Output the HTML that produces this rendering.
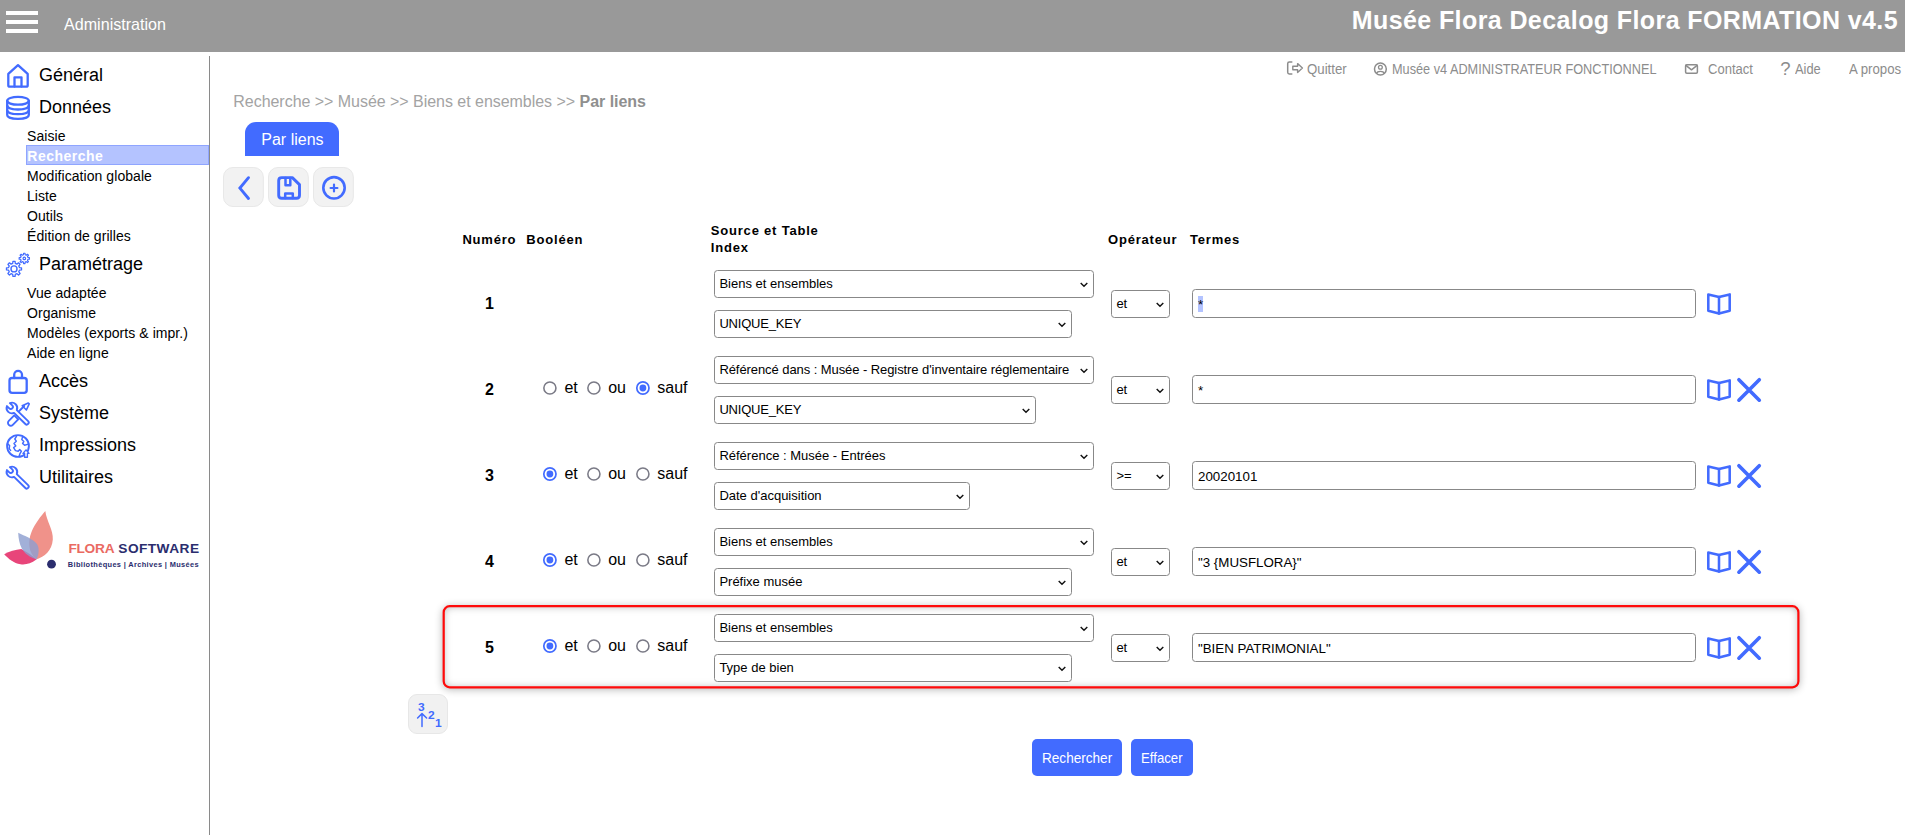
<!DOCTYPE html>
<html lang="fr"><head><meta charset="utf-8"><title>Administration</title><style>
*{box-sizing:border-box}
html,body{margin:0;padding:0}
body{width:1905px;height:835px;position:relative;overflow:hidden;background:#fff;font-family:"Liberation Sans",sans-serif;color:#000}
.t{position:absolute;white-space:nowrap}
.a{position:absolute}
svg{position:absolute;overflow:visible}
.sel{position:absolute;border:1px solid #888;border-radius:3.5px;background:#fff;height:28px}
.sel span{position:absolute;left:4.4px;top:0;font-size:13px;line-height:26px;white-space:nowrap}
.inp{position:absolute;border:1px solid #888;border-radius:3.5px;background:#fff}
.inp span{position:absolute;left:5px;top:1.6px;font-size:13.33px;white-space:nowrap}
.rad{position:absolute;width:13.6px;height:13.6px;border-radius:50%;border:1.4px solid #77777f;background:#fff}
.rad.on{border:1.6px solid #426bff}
.rad.on:after{content:"";position:absolute;left:50%;top:50%;width:7px;height:7px;margin:-3.5px 0 0 -3.5px;border-radius:50%;background:#426bff}
.ib{position:absolute;width:40px;height:40px;background:#f1f1f1;border:1px solid #e7e7e7;border-radius:9px}
.btn{position:absolute;background:#426bff;border-radius:5px;height:37px}
</style></head><body>
<div class="a" style="left:0;top:0;width:1905px;height:51.6px;background:#999"></div>
<div class="a" style="left:6px;top:11px;width:32px;height:4px;background:#fff"></div>
<div class="a" style="left:6px;top:20px;width:32px;height:4px;background:#fff"></div>
<div class="a" style="left:6px;top:29px;width:32px;height:4px;background:#fff"></div>
<div class="t" style="left:63.8px;top:14.00px;font-size:17px;line-height:21px;color:#fff;font-weight:normal;transform:scaleX(0.947);transform-origin:left center;">Administration</div>
<div class="t" style="right:7.0px;top:5.00px;font-size:25px;line-height:30px;color:#fff;font-weight:bold;letter-spacing:0.4px;">Musée Flora Decalog Flora FORMATION v4.5</div>
<div class="a" style="left:209px;top:56px;width:1.3px;height:779px;background:#8a8a8a"></div>
<div class="t" style="left:39px;top:64.00px;font-size:18px;line-height:22px;color:#000;font-weight:normal;">Général</div>
<div class="t" style="left:39px;top:96.00px;font-size:18px;line-height:22px;color:#000;font-weight:normal;">Données</div>
<div class="t" style="left:39px;top:253.00px;font-size:18px;line-height:22px;color:#000;font-weight:normal;">Paramétrage</div>
<div class="t" style="left:39px;top:370.00px;font-size:18px;line-height:22px;color:#000;font-weight:normal;">Accès</div>
<div class="t" style="left:39px;top:402.00px;font-size:18px;line-height:22px;color:#000;font-weight:normal;">Système</div>
<div class="t" style="left:39px;top:434.00px;font-size:18px;line-height:22px;color:#000;font-weight:normal;">Impressions</div>
<div class="t" style="left:39px;top:466.00px;font-size:18px;line-height:22px;color:#000;font-weight:normal;">Utilitaires</div>
<div class="t" style="left:27px;top:127.50px;font-size:14px;line-height:17px;color:#000;font-weight:normal;letter-spacing:0.06px;">Saisie</div>
<div class="t" style="left:27px;top:167.50px;font-size:14px;line-height:17px;color:#000;font-weight:normal;letter-spacing:0.06px;">Modification globale</div>
<div class="t" style="left:27px;top:187.50px;font-size:14px;line-height:17px;color:#000;font-weight:normal;letter-spacing:0.06px;">Liste</div>
<div class="t" style="left:27px;top:207.50px;font-size:14px;line-height:17px;color:#000;font-weight:normal;letter-spacing:0.06px;">Outils</div>
<div class="t" style="left:27px;top:227.50px;font-size:14px;line-height:17px;color:#000;font-weight:normal;letter-spacing:0.06px;">Édition de grilles</div>
<div class="t" style="left:27px;top:284.50px;font-size:14px;line-height:17px;color:#000;font-weight:normal;letter-spacing:0.06px;">Vue adaptée</div>
<div class="t" style="left:27px;top:304.50px;font-size:14px;line-height:17px;color:#000;font-weight:normal;letter-spacing:0.06px;">Organisme</div>
<div class="t" style="left:27px;top:324.50px;font-size:14px;line-height:17px;color:#000;font-weight:normal;letter-spacing:0.06px;">Modèles (exports &amp; impr.)</div>
<div class="t" style="left:27px;top:344.50px;font-size:14px;line-height:17px;color:#000;font-weight:normal;letter-spacing:0.06px;">Aide en ligne</div>
<div class="a" style="left:26px;top:145px;width:183px;height:20px;background:#b4c3ff;border:1px solid #8fa5ff"></div>
<div class="t" style="left:27.3px;top:147.50px;font-size:14px;line-height:17px;color:#fff;font-weight:bold;letter-spacing:0.5px;">Recherche</div>
<svg style="left:0;top:0" width="60" height="500"><g fill="none" stroke="#426bff" stroke-linecap="round" stroke-linejoin="round" stroke-width="2.3"><path d="M8.3 73.8 L18 65.2 L27.7 73.8 V85.2 Q27.7 86.7 26.2 86.7 H9.8 Q8.3 86.7 8.3 85.2 Z"/><path d="M14.5 86.5 V77.3 H21.5 V86.5"/><ellipse cx="18" cy="100.8" rx="10.8" ry="3.9"/><path d="M7.2 100.8 V115 C7.2 120.2 28.8 120.2 28.8 115 V100.8"/><path d="M7.2 105.6 C7.2 110.8 28.8 110.8 28.8 105.6"/><path d="M7.2 110.3 C7.2 115.5 28.8 115.5 28.8 110.3"/><rect x="9.5" y="378" width="17.2" height="14.8" rx="2.6"/><path d="M14.2 378 V374.8 A3.9 3.9 0 0 1 22 374.8 V378"/></g></svg>
<svg style="left:0;top:0" width="60" height="500"><g fill="none" stroke="#426bff" stroke-linecap="round" stroke-linejoin="round"><path stroke-width="1.3" d="M12.69 263.45 L12.93 261.38 L15.07 261.38 L15.31 263.45 L16.93 264.13 L18.56 262.82 L20.08 264.34 L18.77 265.97 L19.45 267.59 L21.52 267.83 L21.52 269.97 L19.45 270.21 L18.77 271.83 L20.08 273.46 L18.56 274.98 L16.93 273.67 L15.31 274.35 L15.07 276.42 L12.93 276.42 L12.69 274.35 L11.07 273.67 L9.44 274.98 L7.92 273.46 L9.23 271.83 L8.55 270.21 L6.48 269.97 L6.48 267.83 L8.55 267.59 L9.23 265.97 L7.92 264.34 L9.44 262.82 L11.07 264.13 Z"/><circle cx="14" cy="268.9" r="3.0" stroke-width="1.4"/><path stroke-width="1.15" d="M23.42 254.75 L23.57 253.25 L25.03 253.25 L25.18 254.75 L26.26 255.20 L27.42 254.24 L28.46 255.28 L27.50 256.44 L27.95 257.52 L29.45 257.67 L29.45 259.13 L27.95 259.28 L27.50 260.36 L28.46 261.52 L27.42 262.56 L26.26 261.60 L25.18 262.05 L25.03 263.55 L23.57 263.55 L23.42 262.05 L22.34 261.60 L21.18 262.56 L20.14 261.52 L21.10 260.36 L20.65 259.28 L19.15 259.13 L19.15 257.67 L20.65 257.52 L21.10 256.44 L20.14 255.28 L21.18 254.24 L22.34 255.20 Z"/><circle cx="24.3" cy="258.4" r="1.25" stroke-width="1.2"/></g></svg>
<svg style="left:0;top:0" width="60" height="500"><g fill="none" stroke="#426bff" stroke-linecap="round" stroke-linejoin="round" stroke-width="1.9"><path transform="translate(11.9 472.0) rotate(44.5)" d="M-4.87 -2.1 A5.3 5.3 0 0 1 4.93 -1.95 L20.8 -1.95 A1.95 1.95 0 0 1 20.8 1.95 L4.93 1.95 A5.3 5.3 0 0 1 -4.87 2.1 L-1.6 2.1 A2.1 2.1 0 0 0 -1.6 -2.1 Z"/></g><g fill="none" stroke="#426bff" stroke-linecap="round" stroke-linejoin="round" stroke-width="1.9"><path d="M8.8 420.8 L14.2 415.4 L18.2 419.4 L12.8 424.8 A2.8 2.8 0 0 1 8.8 420.8 Z"/><path d="M16.4 413.8 L24.2 406"/><path d="M22.2 405.8 L28.3 403 L29.2 403.9 L26.4 410 Z" stroke-width="1.6"/><path transform="translate(11.9 408.0) rotate(44.5)" d="M-4.87 -2.1 A5.3 5.3 0 0 1 4.93 -1.95 L20.8 -1.95 A1.95 1.95 0 0 1 20.8 1.95 L4.93 1.95 A5.3 5.3 0 0 1 -4.87 2.1 L-1.6 2.1 A2.1 2.1 0 0 0 -1.6 -2.1 Z" fill="#fff"/></g></svg>
<svg style="left:0;top:0" width="60" height="500"><g fill="none" stroke="#426bff" stroke-linecap="round" stroke-linejoin="round" stroke-width="1.9"><circle cx="18" cy="446" r="10.9"/><g stroke-width="1.45"><path d="M16.5 436.3 L14.8 439 L16.3 441.2 L14 443.5 L15.8 446 L13.6 447.6 L15.5 450.6 L18.2 451.3 L19.7 449.6 L21.4 451.2 L20 453.6 L19 456.4"/><path d="M22.5 437 L21.8 439.6 L23.8 441.6 L22.6 443.4 L24.6 445.2 L27.6 444.4"/><path d="M8.2 444.3 L9.6 445.6 L9.2 448.6 L10.6 450.4"/></g><path d="M23 453.4 L26 449.9 L29 453.4 H27.4 V457.2 H24.6 V453.4 Z" fill="#fff" stroke-width="1.4"/></g></svg>
<svg style="left:0;top:0" width="210" height="600"><path d="M45.3 511 C46.5 521 53.5 530 52.8 539.5 C52 551 44.5 556.5 36.2 559.6 C28 552 27.8 541 31.5 532 C35 523.5 41 516 45.3 511 Z" fill="#f0928a"/><path d="M4.2 554.3 C9 551.5 15.5 549.5 21.3 549 C28 552.5 33 556 36.4 559.6 C31 563.5 26 565 20.5 564.3 C13.5 563.3 8.5 558.8 4.2 554.3 Z" fill="#e8457a"/><path d="M18.2 532.8 C25 536 32.5 539 36.5 543.5 C39.8 547.5 39 554 36.6 559.3 C30 557.5 24.5 553.5 21.8 548.5 C19.3 543.8 18.4 538 18.2 532.8 Z" fill="#8e9fd0" fill-opacity="0.82"/><circle cx="51.5" cy="564.2" r="4.4" fill="#2b2d6e"/></svg>
<div class="t" style="left:68.4px;top:540.00px;font-size:13.7px;line-height:17px;color:#ea6a62;font-weight:bold;letter-spacing:-0.25px;">FLORA</div>
<div class="t" style="left:118.3px;top:540.00px;font-size:13.7px;line-height:17px;color:#2b2d6e;font-weight:bold;letter-spacing:0.45px;">SOFTWARE</div>
<div class="t" style="left:67.8px;top:560.00px;font-size:7.4px;line-height:9px;color:#2b2d6e;font-weight:bold;letter-spacing:0.36px;">Bibliothèques | Archives | Musées</div>
<div class="t" style="left:1307.2px;top:60.50px;font-size:14px;line-height:17px;color:#8c8c8c;font-weight:normal;transform:scaleX(0.945);transform-origin:left center;">Quitter</div>
<div class="t" style="left:1392.2px;top:60.50px;font-size:14px;line-height:17px;color:#8c8c8c;font-weight:normal;transform:scaleX(0.9075);transform-origin:left center;">Musée v4 ADMINISTRATEUR FONCTIONNEL</div>
<div class="t" style="left:1707.9px;top:60.50px;font-size:14px;line-height:17px;color:#8c8c8c;font-weight:normal;transform:scaleX(0.93);transform-origin:left center;">Contact</div>
<div class="t" style="left:1795.4px;top:60.50px;font-size:14px;line-height:17px;color:#8c8c8c;font-weight:normal;transform:scaleX(0.92);transform-origin:left center;">Aide</div>
<div class="t" style="left:1849.1px;top:60.50px;font-size:14px;line-height:17px;color:#8c8c8c;font-weight:normal;transform:scaleX(0.944);transform-origin:left center;">A propos</div>
<div class="t" style="left:1780.2px;top:57.00px;font-size:18.5px;line-height:23px;color:#8c8c8c;font-weight:normal;">?</div>
<svg style="left:0;top:0" width="1905" height="90"><g fill="none" stroke="#8c8c8c" stroke-linecap="round" stroke-linejoin="round" stroke-width="1.5"><path d="M1291.8 62.1 H1289.3 Q1287.7 62.1 1287.7 63.7 V72.3 Q1287.7 73.9 1289.3 73.9 H1291.8"/><path d="M1292.8 66.2 H1297.6 V63.6 L1302.4 68 L1297.6 72.4 V69.8 H1292.8 Z" stroke-width="1.4"/><circle cx="1380.4" cy="69" r="5.9"/><circle cx="1380.4" cy="67.2" r="1.9" stroke-width="1.3"/><path d="M1376.6 73.3 C1377.4 70.6 1383.4 70.6 1384.2 73.3" stroke-width="1.3"/><rect x="1685.6" y="64.7" width="11.8" height="8.6" rx="1.2"/><path d="M1685.9 65.4 L1691.5 69.8 L1697.1 65.4"/></g></svg>
<div class="t" style="left:233.3px;top:91.50px;font-size:16px;line-height:20px;color:#a3a3a3;font-weight:normal;letter-spacing:-0.035px;">Recherche &gt;&gt; Musée &gt;&gt; Biens et ensembles &gt;&gt; <b style="color:#8f8f8f">Par liens</b></div>
<div class="a" style="left:245px;top:122px;width:94px;height:34px;background:#426bff;border-radius:11px 11px 0 0"></div>
<div class="t" style="left:261.3px;top:129.50px;font-size:16px;line-height:20px;color:#fff;font-weight:normal;">Par liens</div>
<svg style="left:223.1px;top:167px" width="41" height="40"><rect x="0.5" y="0.5" width="39.8" height="39" rx="9.5" fill="#f2f2f2" stroke="#e8e8e8" stroke-width="1"/></svg>
<svg style="left:268.15px;top:167px" width="41" height="40"><rect x="0.5" y="0.5" width="39.8" height="39" rx="9.5" fill="#f2f2f2" stroke="#e8e8e8" stroke-width="1"/></svg>
<svg style="left:313.2px;top:167px" width="41" height="40"><rect x="0.5" y="0.5" width="39.8" height="39" rx="9.5" fill="#f2f2f2" stroke="#e8e8e8" stroke-width="1"/></svg>
<svg style="left:0;top:0" width="500" height="260"><g fill="none" stroke="#426bff" stroke-linecap="round" stroke-linejoin="round" stroke-width="2.9"><path d="M248.5 177.7 L239.9 188.1 L248.5 198.5" stroke-linejoin="miter"/><path d="M278.7 180.6 Q278.7 177.6 281.7 177.6 H292.3 L299.5 184.6 V195.3 Q299.5 198.3 296.5 198.3 H281.7 Q278.7 198.3 278.7 195.3 Z"/><path d="M285.5 178 V185.3 H290.3 V178" stroke-width="2.5"/><path d="M285.2 198 V193.4 H292.8 V198" stroke-width="2.5"/><circle cx="334" cy="187.85" r="10.7" stroke-width="2.6"/><path d="M330.6 188 H337.4 M334 184.6 V191.4" stroke-width="2.2"/></g></svg>
<div class="t" style="left:462.4px;top:231.50px;font-size:13px;line-height:16px;color:#000;font-weight:bold;letter-spacing:0.8px;">Numéro</div>
<div class="t" style="left:526.3px;top:231.50px;font-size:13px;line-height:16px;color:#000;font-weight:bold;letter-spacing:0.8px;">Booléen</div>
<div class="t" style="left:710.8px;top:222.50px;font-size:13px;line-height:16px;color:#000;font-weight:bold;letter-spacing:0.8px;">Source et Table</div>
<div class="t" style="left:710.8px;top:239.50px;font-size:13px;line-height:16px;color:#000;font-weight:bold;letter-spacing:0.8px;">Index</div>
<div class="t" style="left:1108px;top:231.50px;font-size:13px;line-height:16px;color:#000;font-weight:bold;letter-spacing:0.8px;">Opérateur</div>
<div class="t" style="left:1190px;top:231.50px;font-size:13px;line-height:16px;color:#000;font-weight:bold;letter-spacing:0.8px;">Termes</div>
<div class="a" style="left:443px;top:606px;width:1356px;height:82px;border-radius:7px;box-shadow:0 1px 9px rgba(0,0,0,.33), inset 0 0 8px rgba(0,0,0,.34)"></div>
<svg style="left:0;top:0" width="1905" height="835"><rect x="443.7" y="606.2" width="1354.7" height="81.1" rx="6" fill="none" stroke="#ff0a0a" stroke-width="2.2"/></svg>
<div class="t" style="left:485px;top:293.50px;font-size:16px;line-height:20px;color:#000;font-weight:bold;">1</div>
<div class="sel" style="left:714px;top:270px;width:380px;height:28px"><span style="line-height:26px">Biens et ensembles</span><svg style="right:5.5px;top:10.6px" width="8" height="6"><path d="M0.7 0.9 L4 4.3 L7.3 0.9" fill="none" stroke="#111" stroke-width="1.4" stroke-linecap="butt" stroke-linejoin="miter"/></svg></div>
<div class="sel" style="left:714px;top:310px;width:358px;height:28px"><span style="letter-spacing:-0.2px;line-height:26px">UNIQUE_KEY</span><svg style="right:5.5px;top:10.6px" width="8" height="6"><path d="M0.7 0.9 L4 4.3 L7.3 0.9" fill="none" stroke="#111" stroke-width="1.4" stroke-linecap="butt" stroke-linejoin="miter"/></svg></div>
<div class="sel" style="left:1111px;top:290px;width:59px;height:27.6px"><span style="line-height:25.6px">et</span><svg style="right:5.5px;top:10.6px" width="8" height="6"><path d="M0.7 0.9 L4 4.3 L7.3 0.9" fill="none" stroke="#111" stroke-width="1.4" stroke-linecap="butt" stroke-linejoin="miter"/></svg></div>
<div class="inp" style="left:1192px;top:289px;width:504px;height:28.6px"><i class="a" style="left:4.8px;top:6.4px;width:5.2px;height:15.8px;background:#b3c3ff"></i><span style="line-height:26.6px">*</span></div>
<svg style="left:1700px;top:290.2px" width="70" height="30"><g fill="none" stroke="#426bff" stroke-linecap="round" stroke-linejoin="round" stroke-width="2.55" stroke-linejoin="miter"><path d="M8.3 4.4 L19 6.9 L29.7 4.4 V20.8 L19 23.4 L8.3 20.8 Z"/><path d="M19 6.9 V23.4"/></g></svg>
<div class="t" style="left:485px;top:379.50px;font-size:16px;line-height:20px;color:#000;font-weight:bold;">2</div>
<svg style="left:542px;top:379.8px" width="16" height="16"><circle cx="7.9" cy="8" r="6.05" fill="#fff" stroke="#7a7a86" stroke-width="1.55"/></svg>
<div class="t" style="left:564.4px;top:377.50px;font-size:16px;line-height:20px;color:#000;font-weight:normal;">et</div>
<svg style="left:585.9px;top:379.8px" width="16" height="16"><circle cx="7.9" cy="8" r="6.05" fill="#fff" stroke="#7a7a86" stroke-width="1.55"/></svg>
<div class="t" style="left:608.2px;top:377.50px;font-size:16px;line-height:20px;color:#000;font-weight:normal;">ou</div>
<svg style="left:634.9px;top:379.8px" width="16" height="16"><circle cx="7.9" cy="8" r="6.1" fill="#fff" stroke="#426bff" stroke-width="1.7"/><circle cx="7.9" cy="8" r="3.4" fill="#426bff"/></svg>
<div class="t" style="left:657.3px;top:377.50px;font-size:16px;line-height:20px;color:#000;font-weight:normal;">sauf</div>
<div class="sel" style="left:714px;top:356px;width:380px;height:28px"><span style="letter-spacing:-0.075px;line-height:26px">Référencé dans : Musée - Registre d&#39;inventaire réglementaire</span><svg style="right:5.5px;top:10.6px" width="8" height="6"><path d="M0.7 0.9 L4 4.3 L7.3 0.9" fill="none" stroke="#111" stroke-width="1.4" stroke-linecap="butt" stroke-linejoin="miter"/></svg></div>
<div class="sel" style="left:714px;top:396px;width:322px;height:28px"><span style="letter-spacing:-0.2px;line-height:26px">UNIQUE_KEY</span><svg style="right:5.5px;top:10.6px" width="8" height="6"><path d="M0.7 0.9 L4 4.3 L7.3 0.9" fill="none" stroke="#111" stroke-width="1.4" stroke-linecap="butt" stroke-linejoin="miter"/></svg></div>
<div class="sel" style="left:1111px;top:376px;width:59px;height:27.6px"><span style="line-height:25.6px">et</span><svg style="right:5.5px;top:10.6px" width="8" height="6"><path d="M0.7 0.9 L4 4.3 L7.3 0.9" fill="none" stroke="#111" stroke-width="1.4" stroke-linecap="butt" stroke-linejoin="miter"/></svg></div>
<div class="inp" style="left:1192px;top:375px;width:504px;height:28.6px"><span style="line-height:26.6px">*</span></div>
<svg style="left:1700px;top:376.2px" width="70" height="30"><g fill="none" stroke="#426bff" stroke-linecap="round" stroke-linejoin="round" stroke-width="2.55" stroke-linejoin="miter"><path d="M8.3 4.4 L19 6.9 L29.7 4.4 V20.8 L19 23.4 L8.3 20.8 Z"/><path d="M19 6.9 V23.4"/></g><path d="M38.9 3.7 L59.3 24.2 M59.3 3.7 L38.9 24.2" stroke="#426bff" stroke-width="3.6" stroke-linecap="round"/></svg>
<div class="t" style="left:485px;top:465.50px;font-size:16px;line-height:20px;color:#000;font-weight:bold;">3</div>
<svg style="left:542px;top:465.8px" width="16" height="16"><circle cx="7.9" cy="8" r="6.1" fill="#fff" stroke="#426bff" stroke-width="1.7"/><circle cx="7.9" cy="8" r="3.4" fill="#426bff"/></svg>
<div class="t" style="left:564.4px;top:463.50px;font-size:16px;line-height:20px;color:#000;font-weight:normal;">et</div>
<svg style="left:585.9px;top:465.8px" width="16" height="16"><circle cx="7.9" cy="8" r="6.05" fill="#fff" stroke="#7a7a86" stroke-width="1.55"/></svg>
<div class="t" style="left:608.2px;top:463.50px;font-size:16px;line-height:20px;color:#000;font-weight:normal;">ou</div>
<svg style="left:634.9px;top:465.8px" width="16" height="16"><circle cx="7.9" cy="8" r="6.05" fill="#fff" stroke="#7a7a86" stroke-width="1.55"/></svg>
<div class="t" style="left:657.3px;top:463.50px;font-size:16px;line-height:20px;color:#000;font-weight:normal;">sauf</div>
<div class="sel" style="left:714px;top:442px;width:380px;height:28px"><span style="line-height:26px">Référence : Musée - Entrées</span><svg style="right:5.5px;top:10.6px" width="8" height="6"><path d="M0.7 0.9 L4 4.3 L7.3 0.9" fill="none" stroke="#111" stroke-width="1.4" stroke-linecap="butt" stroke-linejoin="miter"/></svg></div>
<div class="sel" style="left:714px;top:482px;width:256px;height:28px"><span style="line-height:26px">Date d&#39;acquisition</span><svg style="right:5.5px;top:10.6px" width="8" height="6"><path d="M0.7 0.9 L4 4.3 L7.3 0.9" fill="none" stroke="#111" stroke-width="1.4" stroke-linecap="butt" stroke-linejoin="miter"/></svg></div>
<div class="sel" style="left:1111px;top:462px;width:59px;height:27.6px"><span style="line-height:25.6px">&gt;=</span><svg style="right:5.5px;top:10.6px" width="8" height="6"><path d="M0.7 0.9 L4 4.3 L7.3 0.9" fill="none" stroke="#111" stroke-width="1.4" stroke-linecap="butt" stroke-linejoin="miter"/></svg></div>
<div class="inp" style="left:1192px;top:461px;width:504px;height:28.6px"><span style="line-height:26.6px">20020101</span></div>
<svg style="left:1700px;top:462.2px" width="70" height="30"><g fill="none" stroke="#426bff" stroke-linecap="round" stroke-linejoin="round" stroke-width="2.55" stroke-linejoin="miter"><path d="M8.3 4.4 L19 6.9 L29.7 4.4 V20.8 L19 23.4 L8.3 20.8 Z"/><path d="M19 6.9 V23.4"/></g><path d="M38.9 3.7 L59.3 24.2 M59.3 3.7 L38.9 24.2" stroke="#426bff" stroke-width="3.6" stroke-linecap="round"/></svg>
<div class="t" style="left:485px;top:551.50px;font-size:16px;line-height:20px;color:#000;font-weight:bold;">4</div>
<svg style="left:542px;top:551.8px" width="16" height="16"><circle cx="7.9" cy="8" r="6.1" fill="#fff" stroke="#426bff" stroke-width="1.7"/><circle cx="7.9" cy="8" r="3.4" fill="#426bff"/></svg>
<div class="t" style="left:564.4px;top:549.50px;font-size:16px;line-height:20px;color:#000;font-weight:normal;">et</div>
<svg style="left:585.9px;top:551.8px" width="16" height="16"><circle cx="7.9" cy="8" r="6.05" fill="#fff" stroke="#7a7a86" stroke-width="1.55"/></svg>
<div class="t" style="left:608.2px;top:549.50px;font-size:16px;line-height:20px;color:#000;font-weight:normal;">ou</div>
<svg style="left:634.9px;top:551.8px" width="16" height="16"><circle cx="7.9" cy="8" r="6.05" fill="#fff" stroke="#7a7a86" stroke-width="1.55"/></svg>
<div class="t" style="left:657.3px;top:549.50px;font-size:16px;line-height:20px;color:#000;font-weight:normal;">sauf</div>
<div class="sel" style="left:714px;top:528px;width:380px;height:28px"><span style="line-height:26px">Biens et ensembles</span><svg style="right:5.5px;top:10.6px" width="8" height="6"><path d="M0.7 0.9 L4 4.3 L7.3 0.9" fill="none" stroke="#111" stroke-width="1.4" stroke-linecap="butt" stroke-linejoin="miter"/></svg></div>
<div class="sel" style="left:714px;top:568px;width:358px;height:28px"><span style="line-height:26px">Préfixe musée</span><svg style="right:5.5px;top:10.6px" width="8" height="6"><path d="M0.7 0.9 L4 4.3 L7.3 0.9" fill="none" stroke="#111" stroke-width="1.4" stroke-linecap="butt" stroke-linejoin="miter"/></svg></div>
<div class="sel" style="left:1111px;top:548px;width:59px;height:27.6px"><span style="line-height:25.6px">et</span><svg style="right:5.5px;top:10.6px" width="8" height="6"><path d="M0.7 0.9 L4 4.3 L7.3 0.9" fill="none" stroke="#111" stroke-width="1.4" stroke-linecap="butt" stroke-linejoin="miter"/></svg></div>
<div class="inp" style="left:1192px;top:547px;width:504px;height:28.6px"><span style="line-height:26.6px">&quot;3 {MUSFLORA}&quot;</span></div>
<svg style="left:1700px;top:548.2px" width="70" height="30"><g fill="none" stroke="#426bff" stroke-linecap="round" stroke-linejoin="round" stroke-width="2.55" stroke-linejoin="miter"><path d="M8.3 4.4 L19 6.9 L29.7 4.4 V20.8 L19 23.4 L8.3 20.8 Z"/><path d="M19 6.9 V23.4"/></g><path d="M38.9 3.7 L59.3 24.2 M59.3 3.7 L38.9 24.2" stroke="#426bff" stroke-width="3.6" stroke-linecap="round"/></svg>
<div class="t" style="left:485px;top:637.50px;font-size:16px;line-height:20px;color:#000;font-weight:bold;">5</div>
<svg style="left:542px;top:637.8px" width="16" height="16"><circle cx="7.9" cy="8" r="6.1" fill="#fff" stroke="#426bff" stroke-width="1.7"/><circle cx="7.9" cy="8" r="3.4" fill="#426bff"/></svg>
<div class="t" style="left:564.4px;top:635.50px;font-size:16px;line-height:20px;color:#000;font-weight:normal;">et</div>
<svg style="left:585.9px;top:637.8px" width="16" height="16"><circle cx="7.9" cy="8" r="6.05" fill="#fff" stroke="#7a7a86" stroke-width="1.55"/></svg>
<div class="t" style="left:608.2px;top:635.50px;font-size:16px;line-height:20px;color:#000;font-weight:normal;">ou</div>
<svg style="left:634.9px;top:637.8px" width="16" height="16"><circle cx="7.9" cy="8" r="6.05" fill="#fff" stroke="#7a7a86" stroke-width="1.55"/></svg>
<div class="t" style="left:657.3px;top:635.50px;font-size:16px;line-height:20px;color:#000;font-weight:normal;">sauf</div>
<div class="sel" style="left:714px;top:614px;width:380px;height:28px"><span style="line-height:26px">Biens et ensembles</span><svg style="right:5.5px;top:10.6px" width="8" height="6"><path d="M0.7 0.9 L4 4.3 L7.3 0.9" fill="none" stroke="#111" stroke-width="1.4" stroke-linecap="butt" stroke-linejoin="miter"/></svg></div>
<div class="sel" style="left:714px;top:654px;width:358px;height:28px"><span style="line-height:26px">Type de bien</span><svg style="right:5.5px;top:10.6px" width="8" height="6"><path d="M0.7 0.9 L4 4.3 L7.3 0.9" fill="none" stroke="#111" stroke-width="1.4" stroke-linecap="butt" stroke-linejoin="miter"/></svg></div>
<div class="sel" style="left:1111px;top:634px;width:59px;height:27.6px"><span style="line-height:25.6px">et</span><svg style="right:5.5px;top:10.6px" width="8" height="6"><path d="M0.7 0.9 L4 4.3 L7.3 0.9" fill="none" stroke="#111" stroke-width="1.4" stroke-linecap="butt" stroke-linejoin="miter"/></svg></div>
<div class="inp" style="left:1192px;top:633px;width:504px;height:28.6px"><span style="line-height:26.6px">&quot;BIEN PATRIMONIAL&quot;</span></div>
<svg style="left:1700px;top:634.2px" width="70" height="30"><g fill="none" stroke="#426bff" stroke-linecap="round" stroke-linejoin="round" stroke-width="2.55" stroke-linejoin="miter"><path d="M8.3 4.4 L19 6.9 L29.7 4.4 V20.8 L19 23.4 L8.3 20.8 Z"/><path d="M19 6.9 V23.4"/></g><path d="M38.9 3.7 L59.3 24.2 M59.3 3.7 L38.9 24.2" stroke="#426bff" stroke-width="3.6" stroke-linecap="round"/></svg>
<div class="ib" style="left:408px;top:694px"></div>
<svg style="left:400px;top:690px" width="60" height="50"><g fill="none" stroke="#426bff" stroke-linecap="round" stroke-linejoin="round" stroke-width="1.5"><path d="M22 36.5 V24 M17.6 28 L22 23.6 L26.6 28"/></g></svg>
<div class="t" style="left:418.4px;top:701.50px;font-size:10px;line-height:12px;color:#426bff;font-weight:bold;transform:scaleX(1.2);transform-origin:left center;">3</div>
<div class="t" style="left:428px;top:709.50px;font-size:10px;line-height:12px;color:#426bff;font-weight:bold;transform:scaleX(1.2);transform-origin:left center;">2</div>
<div class="t" style="left:435.4px;top:717.50px;font-size:10px;line-height:12px;color:#426bff;font-weight:bold;transform:scaleX(1.2);transform-origin:left center;">1</div>
<div class="btn" style="left:1032px;top:739px;width:90px"></div>
<div class="btn" style="left:1131.2px;top:739px;width:61.8px"></div>
<div class="t" style="left:1041.6px;top:749.00px;font-size:14.2px;line-height:18px;color:#fff;font-weight:normal;transform:scaleX(0.957);transform-origin:left center;">Rechercher</div>
<div class="t" style="left:1140.6px;top:749.00px;font-size:14.2px;line-height:18px;color:#fff;font-weight:normal;transform:scaleX(0.93);transform-origin:left center;">Effacer</div>
</body></html>
